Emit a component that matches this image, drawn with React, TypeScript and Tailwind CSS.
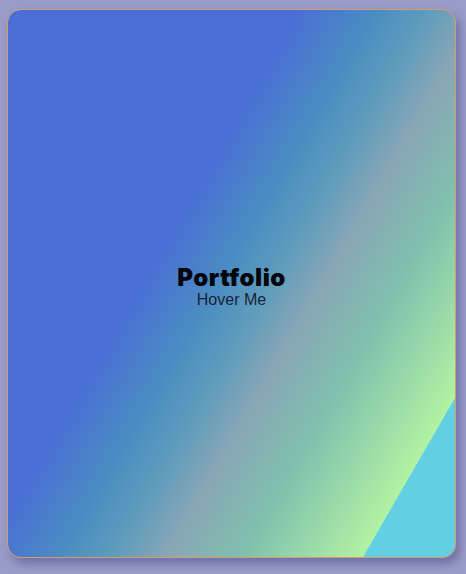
export default function App() {
  return (
    <div className="min-h-screen w-full bg-[#9a9cc8] pl-[7px] pt-[9px]">
      <div className="relative flex h-[549px] w-[449px] flex-col items-center justify-center overflow-hidden rounded-[14px] border border-[#d49c74] bg-[linear-gradient(120deg,#4a6ed6_0%,#4a6ed6_38%,#4a8cc2_48%,#5e9cbc_55%,#88a6b6_62%,#80c0ae_72%,#9cdca8_81%,#b2f2a2_87.9%,#62d0e2_88%,#62d0e2_100%)] shadow-[4px_6px_10px_rgba(60,60,120,0.45)]">
        <div className="mt-[6px] flex flex-col items-center">
          <h1 className="font-['Inter',sans-serif] text-[24px] font-black leading-[27px] tracking-[0.5px] text-[#05060c]">
            Portfolio
          </h1>
          <p className="font-['Liberation_Sans',Arial,sans-serif] text-[16px] leading-[18px] text-[#1b2236]">
            Hover Me
          </p>
        </div>
      </div>
    </div>
  );
}
